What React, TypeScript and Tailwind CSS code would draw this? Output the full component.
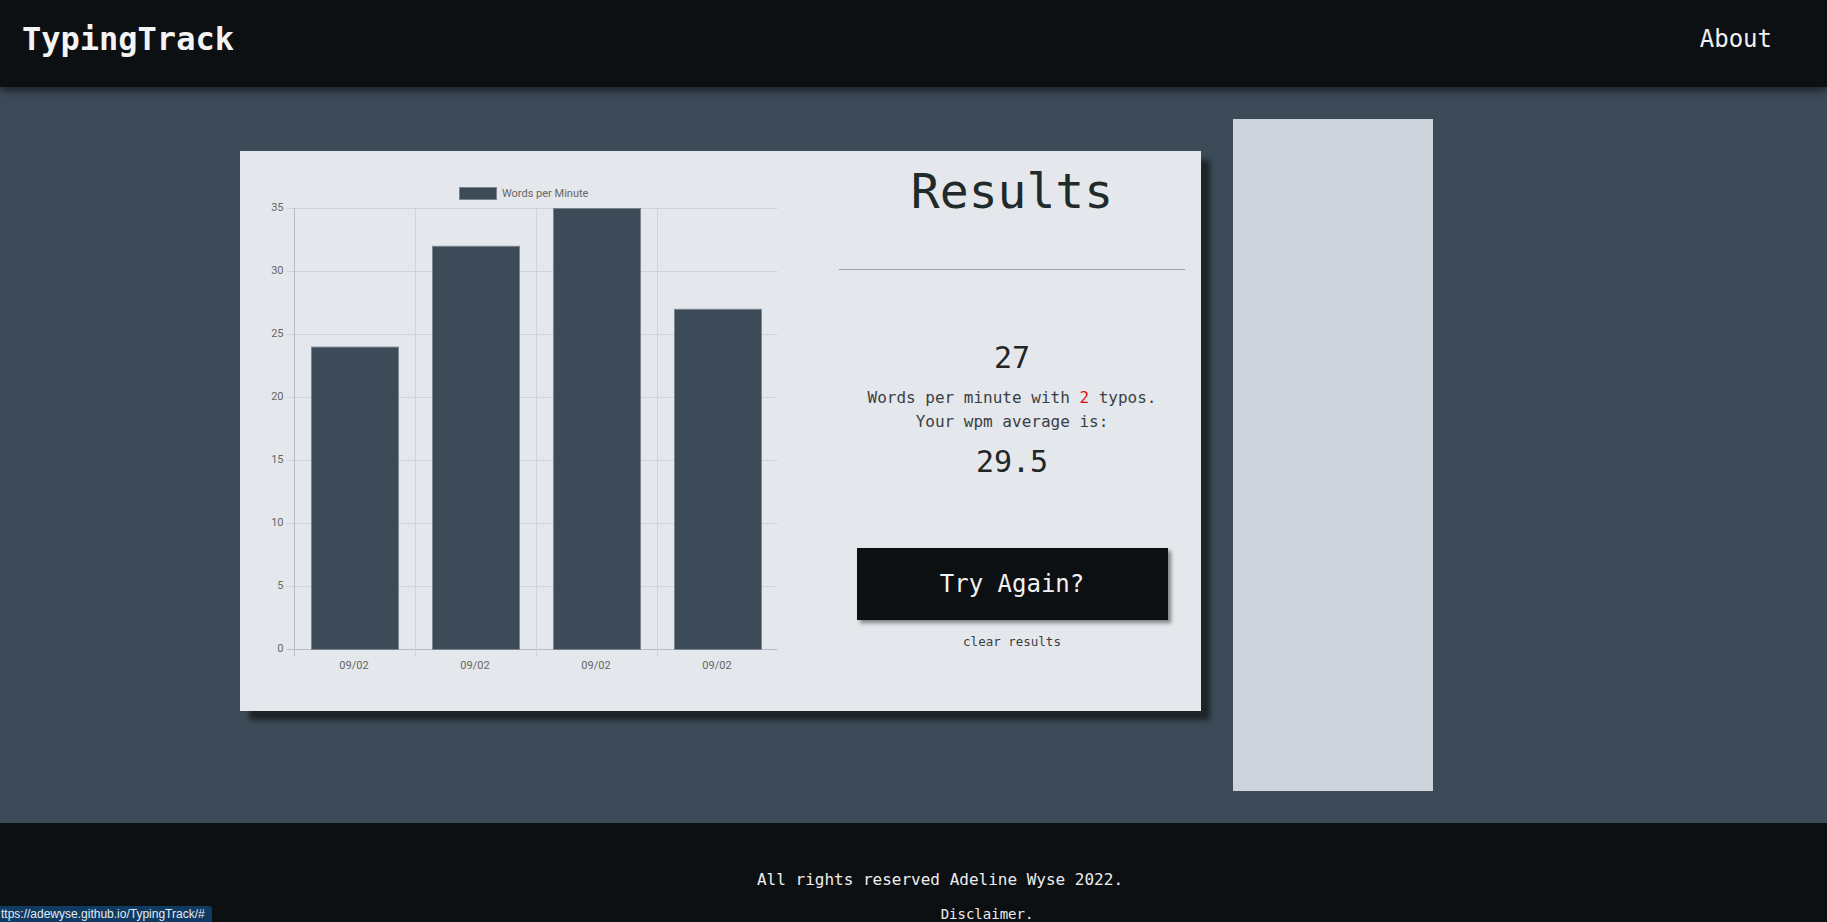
import React from "react";

const mono = { fontFamily: '"DejaVu Sans Mono", "Liberation Mono", monospace' };

const bars = [24, 32, 35, 27];
const ticks = [0, 5, 10, 15, 20, 25, 30, 35];

// chart geometry (px inside the svg)
const X0 = 53.5;
const COL = 121;
const Y0 = 498;
const UNIT = 12.6;

const WpmChart: React.FC = () => {
  return (
    <svg width={599} height={560} className="shrink-0" style={{ fontFamily: 'Roboto, "Liberation Sans", Arial, sans-serif' }}>
      {/* legend */}
      <rect x={219.5} y={36.5} width={37} height={12} fill="#3d4a58" stroke="#7b8491" />
      <text x={262} y={46} fontSize={11} fill="#666">
        Words per Minute
      </text>

      {/* horizontal grid */}
      {ticks.map((t) => {
        const y = Y0 - t * UNIT;
        return (
          <g key={t}>
            <line x1={46.5} x2={X0 + 4 * COL} y1={y + 0.5} y2={y + 0.5} stroke={t === 0 ? "#b9bdc2" : "#d0d3d7"} />
            <text x={43.5} y={y + 0.5} fontSize={11} fill="#666" textAnchor="end" dominantBaseline="middle">
              {t}
            </text>
          </g>
        );
      })}

      {/* vertical grid */}
      {[0, 1, 2, 3].map((i) => (
        <line
          key={i}
          x1={Math.round(X0 + i * COL) + 0.5}
          x2={Math.round(X0 + i * COL) + 0.5}
          y1={57}
          y2={505}
          stroke={i === 0 ? "#b9bdc2" : "#d0d3d7"}
        />
      ))}

      {/* bars */}
      {bars.map((v, i) => {
        const h = v * UNIT;
        return (
          <rect
            key={i}
            x={Math.round(X0 + i * COL + 17) + 0.5}
            y={Y0 - h + 0.5}
            width={87}
            height={h}
            fill="#3d4a58"
            stroke="#7b8491"
          />
        );
      })}

      {/* x labels */}
      {bars.map((_, i) => (
        <text key={i} x={X0 + i * COL + 60.5} y={518} fontSize={11} fill="#666" textAnchor="middle">
          09/02
        </text>
      ))}
    </svg>
  );
};

const App: React.FC = () => {
  return (
    <div className="min-h-screen bg-[#0d1012]" style={mono}>
      {/* HEADER */}
      <header className="relative z-10 flex h-[87px] items-center justify-between bg-[#0d1012] pb-[10px] pl-[22px] pr-[55px] shadow-[0_4px_8px_rgba(0,0,0,0.55)]">
        <h1 className="text-[32px] font-bold leading-none text-[#f4f4f4]">TypingTrack</h1>
        <a href="#" className="text-[24px] leading-none text-[#f0f0f0]">
          About
        </a>
      </header>

      {/* BODY */}
      <main className="flex h-[736px] items-start gap-8 bg-[#3d4b59] py-8 pl-[240px]">
        {/* RESULTS CARD */}
        <div className="mt-8 flex h-[560px] w-[961px] bg-[#e4e7eb] shadow-[9px_9px_5px_#1e2527]">
          <WpmChart />

          <div className="flex w-[346px] flex-col items-center">
            <h2 className="mt-4 text-[48px] leading-[48px] text-[#1f2a2a]">Results</h2>
            <div className="mt-[54px] h-px w-full bg-[#9ca2a7]" />

            <div className="mt-[70px] text-[30px] leading-[36px] text-[#1f2626]">27</div>
            <p className="mt-[10px] text-center text-[16px] leading-[24px] text-[#3b4045]">
              Words per minute with <span className="text-[#e01010]">2</span> typos.
              <br />
              Your wpm average is:
            </p>
            <div className="mt-[10px] text-[30px] leading-[36px] text-[#1f2626]">29.5</div>

            <button className="mt-[68px] h-[72px] w-[311px] bg-[#0d1012] text-[24px] text-[#f2f2f2] shadow-[3px_3px_4px_rgba(0,0,0,0.45)]">
              Try Again?
            </button>
            <a href="#" className="mt-[14px] text-[12.5px] leading-[16px] text-[#3b4045]">
              clear results
            </a>
          </div>
        </div>

        {/* SIDE PANEL */}
        <div className="h-[672px] w-[200px] bg-[#ccd3db]" />
      </main>

      {/* FOOTER */}
      <footer className="bg-[#0d1012] pt-[45px] pb-6 text-[#ededed]">
        <div className="flex justify-center pl-[53px]">
          <p className="text-[16px] leading-[24px]">All rights reserved Adeline Wyse 2022.</p>
        </div>
        <div className="mt-[12px] flex justify-center pl-[147px]">
          <a href="#" className="text-[14px] leading-[20px]">
            Disclaimer.
          </a>
        </div>
      </footer>

      {/* link preview */}
      <div
        className="fixed bottom-0 left-0 h-[16px] w-[212px] overflow-hidden rounded-tr-[3px] bg-[#0f3a62] pl-px text-[12px] leading-[16px] text-[#e3ebf2]"
        style={{ fontFamily: '"Liberation Sans", Arial, sans-serif' }}
      >
        ttps://adewyse.github.io/TypingTrack/#
      </div>
    </div>
  );
};

export default App;
